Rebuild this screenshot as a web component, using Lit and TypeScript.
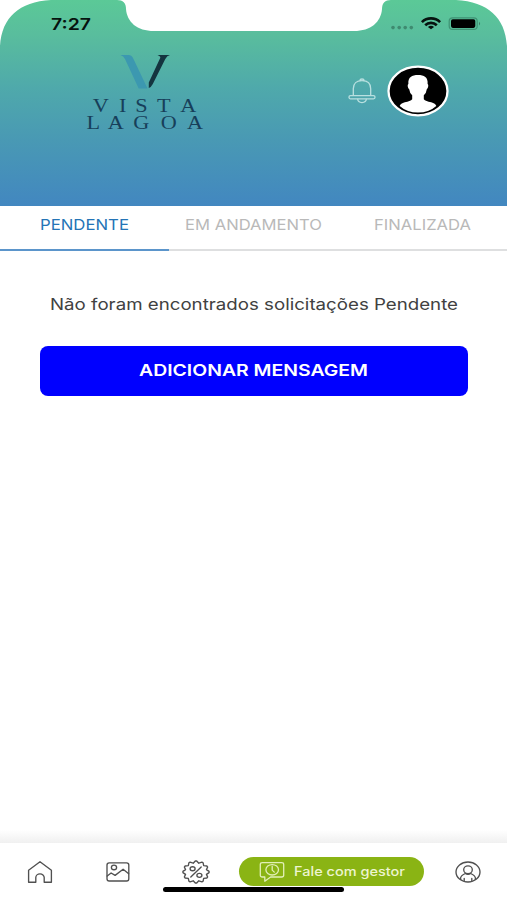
import { LitElement, html, css, svg } from "lit";
import { customElement, property, state } from "lit/decorators.js";

@customElement("wide-text")
class WideText extends LitElement {
  @property() text = "";
  @property({ type: Number }) width = 100;
  static styles = css`
    :host { display: block; height: 24px; flex: none; }
    svg { display: block; overflow: visible; }
    text { fill: currentColor; }
  `;
  render() {
    return html`<svg width=${this.width} height="24">
      <text x="0" y="18" textLength=${this.width} lengthAdjust="spacingAndGlyphs">${this.text}</text>
    </svg>`;
  }
}

const badge = (() => {
  const n = 12;
  let d = "";
  for (let i = 0; i < n; i++) {
    const p = (k: number, r: number) => {
      const a = ((k * 2 * Math.PI) / n) - Math.PI / 2;
      return `${(14 + Math.cos(a) * r * 1.19).toFixed(2)} ${(12 + Math.sin(a) * r).toFixed(2)}`;
    };
    if (i === 0) d += `M${p(-0.5, 9.1)}`;
    d += `L${p(i - 0.1, 11)}L${p(i + 0.1, 11)}L${p(i + 0.5, 9.1)}`;
  }
  return d + "Z";
})();

const icons = {
  home: svg`<path d="M2.6 22.2V10.2L14 1.8l11.4 8.4v12H18.2v-4.6a4.2 3.8 0 0 0-8.4 0v4.6Z"/>`,
  image: svg`<rect x="3" y="2.8" width="21.8" height="18.2" rx="2.2"/><ellipse cx="10" cy="7.4" rx="2.6" ry="2.3"/><path d="m3.2 16 3.9-3 4 2.4 8-6.1 5.6 4.4"/>`,
  offer: svg`<path d=${badge}/><path d="M19.2 7 8.8 17"/><ellipse cx="10.6" cy="8.7" rx="2.5" ry="2"/><ellipse cx="17.4" cy="15.3" rx="2.5" ry="2"/>`,
  profile: svg`<ellipse cx="14" cy="12" rx="12" ry="10"/><ellipse cx="14" cy="9.8" rx="4.3" ry="3.9"/><path d="M6.6 19.2v-1.1c0-2.2 2.1-3.3 4.7-4.6 1.7 1 3.7 1 5.4 0 2.6 1.3 4.7 2.4 4.7 4.6v1.1M10.2 18.4v2.4M17.8 18.4v2.4"/>`,
};

@customElement("app-root")
class AppRoot extends LitElement {
  @state() private active = 0;

  static styles = css`
    :host { display: flex; flex-direction: column; width: 507px; height: 900px; background: #fff; overflow: hidden; font-family: Inter, "Liberation Sans", sans-serif; position: relative; }
    svg { display: block; flex: none; overflow: visible; }
    .header { height: 206px; background: linear-gradient(#5bc997 0, #59bd9d 35px, #4fa9ab 88px, #4999b4 140px, #4287c0 206px); position: relative; flex: none; }
    .frame { position: absolute; inset: 0; }
    .status { position: relative; display: flex; height: 48px; padding: 0 25px 0 51px; justify-content: space-between; }
    .clock { margin-top: 11.5px; font-size: 16px; font-weight: 600; color: #06130f; }
    .brand { position: relative; display: flex; justify-content: space-between; padding: 0 58.5px 0 80px; }
    .logo text { font-family: "Liberation Serif", serif; font-size: 18.5px; fill: #173f5a; text-anchor: middle; }
    .account { display: flex; gap: 11px; padding-top: 17px; align-items: center; height: 52px; }
    .tabs { display: grid; grid-template-columns: repeat(3, 1fr); height: 45px; flex: none; }
    .tab { display: flex; justify-content: center; padding-top: 6.3px; box-sizing: border-box; border: 0; border-bottom: 2px solid #dedfe0; color: #b9b9b9; font-size: 15px; }
    .tab.on { color: #2474b6; border-bottom-color: #5b95cb; }
    .main { flex: 1; padding: 40.5px 39px 0 40px; display: flex; flex-direction: column; align-items: center; }
    .message { color: #414141; font-size: 16.2px; }
    .add { margin-top: 30px; width: 428px; height: 50px; box-sizing: border-box; border-radius: 8px; background: #00f; color: #fff; font-size: 16.4px; font-weight: 600; display: flex; justify-content: center; padding: 12.5px 1px 0 0; }
    .fade { height: 13px; background: linear-gradient(#fff, #f0f0f0); flex: none; }
    .nav { height: 57px; flex: none; display: grid; grid-template-columns: 78px 77.5px 57.5px 215px 28px; align-items: start; padding-left: 26px; box-sizing: border-box; }
    .icon { margin-top: 17px; fill: none; stroke: #505050; stroke-width: 1.35; stroke-linejoin: round; stroke-linecap: round; }
    .talk { display: flex; width: 185px; height: 29px; margin-top: 14px; border-radius: 15px; background: #8ab414; box-sizing: border-box; padding: 0 19px 0 20px; justify-content: space-between; color: #edf5d0; font-size: 12.6px; font-weight: 500; }
    .talk wide-text { margin-top: 1.2px; }
    .chat { margin-top: 4px; fill: none; stroke: #e2efb8; stroke-width: 1.3; stroke-linejoin: round; stroke-linecap: round; }
    .indicator { position: absolute; left: 163px; top: 887px; width: 181px; height: 5px; border-radius: 3px; background: #000; }
  `;

  render() {
    const tabs: [string, number][] = [["PENDENTE", 89], ["EM ANDAMENTO", 137], ["FINALIZADA", 97]];
    const icon = (g: unknown) => html`<svg class="icon" width="28" height="24" viewBox="0 0 28 24">${g}</svg>`;
    return html`
      <div class="header">
        <svg class="frame" width="507" height="60" fill="#fff">
          <path d="M0 0H51C19 2 2 17 0 46ZM507 0H456C488 2 505 17 507 46Z"/>
          <path d="M117 0C123 0 126 3 126 9C127 22 137 31 154 31H354C371 31 381 22 382 9C382 3 385 0 391 0Z"/>
        </svg>
        <div class="status">
          <wide-text class="clock" text="7:27" width="40"></wide-text>
          <svg width="92" height="48" viewBox="390 0 92 48">
            <g fill="#3f8b70"><circle cx="393" cy="27.6" r="1.8"/><circle cx="399.2" cy="27.6" r="1.8"/><circle cx="405.2" cy="27.6" r="1.8"/><circle cx="411.3" cy="27.6" r="1.8"/></g>
            <g fill="none" stroke="#06130f" stroke-width="2.7"><path d="M421.9 22.1C427 17.2 435 17.2 440.1 22.1"/><path d="M425.2 25.2C428.5 22.1 433.5 22.1 436.8 25.2"/></g>
            <path d="M427.9 26.9Q431 24.6 434.1 26.9L431 29.3Z" fill="#06130f"/>
            <rect x="449.2" y="17.8" width="28" height="11.6" rx="3.5" fill="none" stroke="#3f9274" stroke-width="1.2"/>
            <rect x="451" y="19.3" width="24.3" height="8.6" rx="1.8" fill="#000"/>
            <path d="M479 21.8q2.2 1.8 0 3.6Z" fill="#3f7f68"/>
          </svg>
        </div>
        <div class="brand">
          <svg class="logo" width="130" height="90" viewBox="80 48 130 90">
            <path d="M120.5 55H128.5Q131.5 55 133 58L147.5 88.4H138.7L125 59Q123.6 56 120.5 55Z" fill="#3c98b0"/>
            <path d="M157.5 55H170Q167 55.5 165.3 59L152.8 84Q151.3 87 148.8 88V82.5L160.2 58Q161 56.3 157.5 55Z" fill="#14343f"/>
            <g transform="scale(1.2 1)">
              <text y="111.8" x="83.9 102.2 117.8 136.5 156.8">VISTA</text>
              <text y="128.7" x="77.7 96.5 117.7 140.6 162.6">LAGOA</text>
            </g>
          </svg>
          <div class="account">
            <svg width="28" height="26" viewBox="0 0 28 26" fill="none" stroke="#b9e0e0" stroke-width="1.3" stroke-linejoin="round">
              <path d="M5.3 17.6V10.8C5.3 5.4 8.7 2.7 14 2.7S22.7 5.4 22.7 10.8v6.8M11.7 2.9Q12 1 14 1t2.3 1.9"/><rect x="1" y="17.6" width="26" height="3.2" rx="1.5"/><path d="M9.6 20.8C10 25.8 18 25.8 18.4 20.8"/>
            </svg>
            <svg width="62" height="52" viewBox="0 0 62 52">
              <ellipse cx="31" cy="26" rx="29.5" ry="24.3" fill="#000" stroke="#fff" stroke-width="2.3"/>
              <path d="M31 10C37 10 41.2 12 40.6 19C42 19.8 41 23.5 39.8 24.2Q39.3 28.2 36.8 30.3V34.3Q38.6 36.4 44.2 37.3Q48.5 38.4 49.3 41Q42 47.6 31 47.6T12.7 41Q13.5 38.4 17.8 37.3Q23.4 36.4 25.2 34.3V30.3Q22.7 28.2 22.2 24.2C21 23.5 20 19.8 21.4 19C20.8 12 25 10 31 10Z" fill="#fff"/>
            </svg>
          </div>
        </div>
      </div>
      <div class="tabs">
        ${tabs.map(([t, w], i) => html`<div class="tab ${i === this.active ? "on" : ""}" @click=${() => (this.active = i)}><wide-text text=${t} width=${w}></wide-text></div>`)}
      </div>
      <div class="main">
        <wide-text class="message" text="Não foram encontrados solicitações Pendente" width="408"></wide-text>
        <div class="add"><wide-text text="ADICIONAR MENSAGEM" width="229"></wide-text></div>
      </div>
      <div class="fade"></div>
      <div class="nav">
        ${icon(icons.home)}${icon(icons.image)}${icon(icons.offer)}
        <div class="talk">
          <svg class="chat" width="26" height="22" viewBox="0 0 26 22"><path d="M3.3 1.6H22.7Q24.7 1.6 24.7 3.4V14.2Q24.7 16 22.7 16H11.6L5.8 20.2V16H3.3Q1.3 16 1.3 14.2V3.4Q1.3 1.6 3.3 1.6Z"/><ellipse cx="13.2" cy="8.8" rx="6.3" ry="5.2"/><path d="M13.2 5.4v3.7l2.1 2"/></svg>
          <wide-text text="Fale com gestor" width="111"></wide-text>
        </div>
        ${icon(icons.profile)}
      </div>
      <div class="indicator"></div>`;
  }
}
